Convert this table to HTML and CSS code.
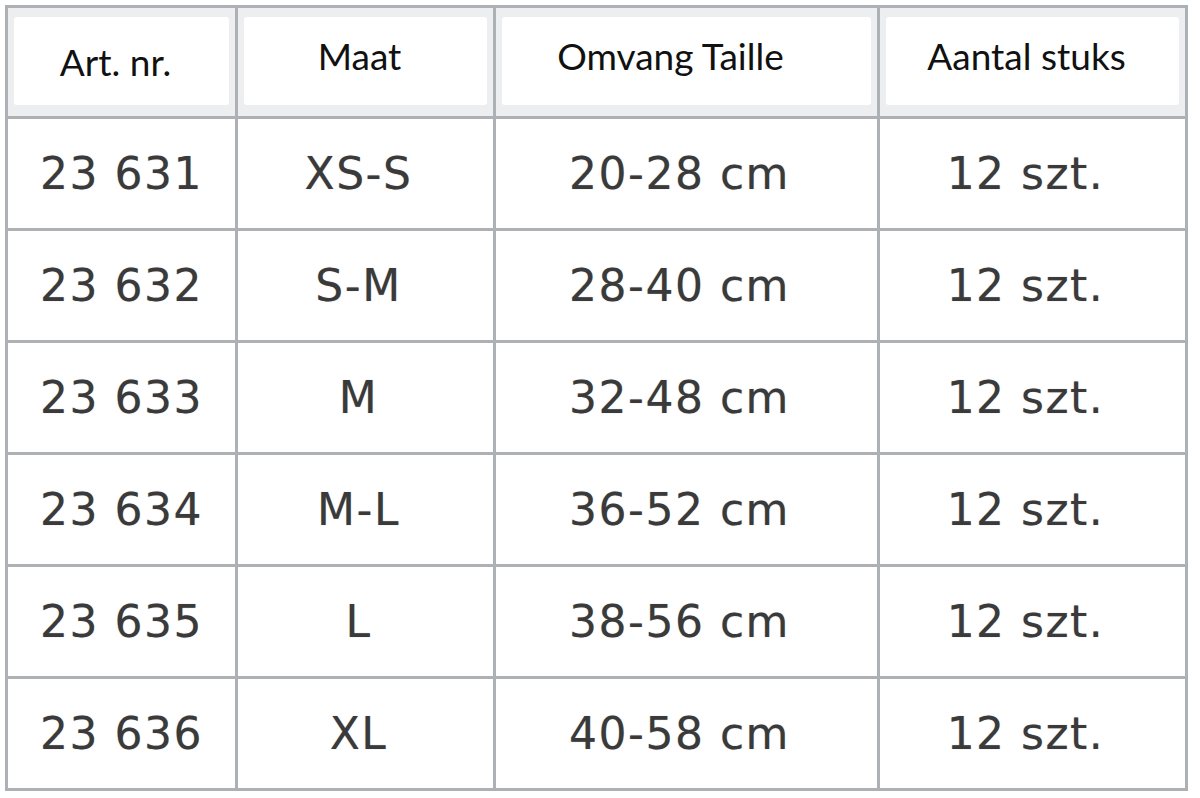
FILE: index.html
```html
<!DOCTYPE html>
<html lang="nl">
<head>
<meta charset="utf-8">
<title>Maattabel</title>
<link rel="stylesheet" href="styles.css">
</head>
<body>
<table class="size-table">
  <colgroup>
    <col class="c1"><col class="c2"><col class="c3"><col class="c4">
  </colgroup>
  <thead>
    <tr>
      <th><div class="head-box head-low">Art. nr.</div></th>
      <th><div class="head-box">Maat</div></th>
      <th><div class="head-box head-wide">Omvang Taille</div></th>
      <th><div class="head-box">Aantal stuks</div></th>
    </tr>
  </thead>
  <tbody>
    <tr><td>23 631</td><td>XS-S</td><td>20-28 cm</td><td>12 szt.</td></tr>
    <tr><td>23 632</td><td>S-M</td><td>28-40 cm</td><td>12 szt.</td></tr>
    <tr><td>23 633</td><td>M</td><td>32-48 cm</td><td>12 szt.</td></tr>
    <tr><td>23 634</td><td>M-L</td><td>36-52 cm</td><td>12 szt.</td></tr>
    <tr><td>23 635</td><td>L</td><td>38-56 cm</td><td>12 szt.</td></tr>
    <tr><td>23 636</td><td>XL</td><td>40-58 cm</td><td>12 szt.</td></tr>
  </tbody>
</table>
</body>
</html>
```

FILE: styles.css
```css
html, body {
  margin: 0;
  padding: 0;
  background: #ffffff;
}

body {
  padding: 5px 0 0 5px;
}

.size-table {
  border-collapse: collapse;
  table-layout: fixed;
  width: 1180px;
}

.c1 { width: 230px; }
.c2 { width: 258px; }
.c3 { width: 384px; }
.c4 { width: 308px; }

.size-table th,
.size-table td {
  border: 3px solid #adb1b6;
  padding: 0;
  text-align: center;
  vertical-align: middle;
}

.size-table th {
  height: 108px;
  background: #eceef0;
  font-family: Lato, "Open Sans", sans-serif;
  font-weight: 400;
  font-size: 37px;
  color: #111111;
}

.head-box {
  margin: 8px 6px 10px;
  height: 88px;
  background: #ffffff;
  border-radius: 3px;
  display: flex;
  align-items: center;
  justify-content: center;
  padding: 0 12px 12px 0;
  box-sizing: border-box;
}

.head-box.head-low {
  padding-bottom: 0;
}

.head-box.head-wide {
  padding-right: 32px;
}

.size-table td {
  height: 109px;
  font-family: "DejaVu Sans", Verdana, sans-serif;
  font-size: 44px;
  letter-spacing: 1.5px;
  color: #3a3a3a;
  padding-right: 14px;
  text-shadow: 0 0 1px rgba(0,0,0,0.35);
}

.size-table td:first-child {
  padding-right: 0;
}
```
